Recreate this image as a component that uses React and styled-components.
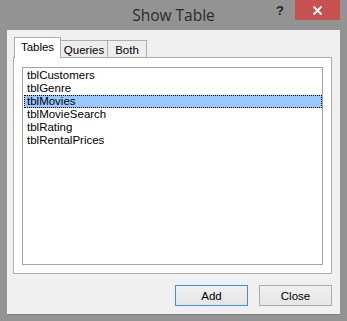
import React, { useState } from "react";
import styled, { createGlobalStyle } from "styled-components";

const tables = [
  "tblCustomers",
  "tblGenre",
  "tblMovies",
  "tblMovieSearch",
  "tblRating",
  "tblRentalPrices",
];

const tabs = [
  { name: "Tables", width: 47 },
  { name: "Queries", width: 48 },
  { name: "Both", width: 40 },
];

const GlobalStyle = createGlobalStyle`
  html, body {
    margin: 0;
    padding: 0;
    background: #939393;
  }
  * {
    box-sizing: border-box;
  }
`;

function App() {
  const [tab, setTab] = useState("Tables");
  const [selected, setSelected] = useState("tblMovies");

  return (
    <Window>
      <GlobalStyle />
      <TitleBar>
        <span />
        <Title>Show Table</Title>
        <Controls>
          <Help>?</Help>
          <CloseX>
            <svg width="11" height="9" viewBox="0 0 11 9">
              <path d="M1.5 0.5 L9.5 8.5 M9.5 0.5 L1.5 8.5" stroke="#fff" strokeWidth="2" />
            </svg>
          </CloseX>
        </Controls>
      </TitleBar>
      <Content>
        <TabStrip>
          {tabs.map((t) => (
            <Tab
              key={t.name}
              $active={tab === t.name}
              $width={t.width}
              onClick={() => setTab(t.name)}
            >
              {t.name}
            </Tab>
          ))}
        </TabStrip>
        <Panel>
          <ListBox>
            {tables.map((name) => (
              <Item
                key={name}
                $selected={selected === name}
                onClick={() => setSelected(name)}
              >
                {name}
              </Item>
            ))}
          </ListBox>
        </Panel>
        <Buttons>
          <Button $default>Add</Button>
          <Button>Close</Button>
        </Buttons>
      </Content>
    </Window>
  );
}

const Window = styled.div`
  width: 347px;
  height: 321px;
  background: #939393;
  padding: 0 7px 6px 7px;
  display: flex;
  flex-direction: column;
  font-family: "Liberation Sans", Arial, sans-serif;
  font-size: 11.5px;
  color: #000;
`;

const TitleBar = styled.div`
  height: 30px;
  display: grid;
  grid-template-columns: 1fr auto 1fr;
  align-items: start;
`;

const Title = styled.div`
  font-family: "Open Sans", "Noto Sans", sans-serif;
  font-size: 15.5px;
  color: #2a2a2a;
  line-height: 30px;
`;

const Controls = styled.div`
  justify-self: end;
  display: flex;
  align-items: flex-start;
`;

const Help = styled.div`
  width: 26px;
  height: 20px;
  margin-right: 2px;
  display: flex;
  align-items: center;
  justify-content: center;
  font-family: "Liberation Sans", Arial, sans-serif;
  font-weight: bold;
  font-size: 13px;
  color: #222;
`;

const CloseX = styled.div`
  width: 45px;
  height: 20px;
  background: #c75050;
  display: flex;
  align-items: center;
  justify-content: center;
`;

const Content = styled.div`
  flex: 1;
  background: #f0f0f0;
  border-bottom: 1px solid #7f7f7f;
  padding: 7px 8px 0 6px;
  display: flex;
  flex-direction: column;
`;

const TabStrip = styled.div`
  height: 21px;
  display: flex;
  align-items: flex-end;
  padding-left: 1px;
  margin-bottom: -1px;
  position: relative;
  z-index: 1;
`;

const Tab = styled.div`
  width: ${(p) => p.$width}px;
  height: ${(p) => (p.$active ? "21px" : "18px")};
  padding-top: 2px;
  text-align: center;
  background: ${(p) => (p.$active ? "#fff" : "#eeeeee")};
  border: 1px solid #adadad;
  border-bottom: ${(p) => (p.$active ? "none" : "1px solid #adadad")};
  margin-left: -1px;
  line-height: 14px;
  white-space: nowrap;
  cursor: default;

  &:first-child {
    margin-left: 0;
  }
`;

const Panel = styled.div`
  height: 217px;
  background: #fff;
  border: 1px solid #adadad;
  padding: 9px 8px 8px 8px;
  display: flex;
`;

const ListBox = styled.div`
  flex: 1;
  border: 1px solid #a3a3a3;
  background: #fff;
  padding: 1px 0;
`;

const Item = styled.div`
  height: 13px;
  line-height: 13px;
  margin: 0 0 0 1px;
  padding-left: 3px;
  white-space: nowrap;
  cursor: default;
  background: ${(p) => (p.$selected ? "#99c9ff" : "transparent")};
  outline: ${(p) => (p.$selected ? "1px dotted #000" : "none")};
  outline-offset: -1px;
`;

const Buttons = styled.div`
  margin-top: 11px;
  display: flex;
  justify-content: flex-end;
  gap: 11px;
`;

const Button = styled.button`
  width: 73px;
  height: 21px;
  font-family: "Liberation Sans", Arial, sans-serif;
  font-size: 11.5px;
  color: #000;
  background: linear-gradient(#f0f0f0, #e5e5e5);
  border: 1px solid ${(p) => (p.$default ? "#3c8ee8" : "#acacac")};
  padding: 0;
`;

export default App;
